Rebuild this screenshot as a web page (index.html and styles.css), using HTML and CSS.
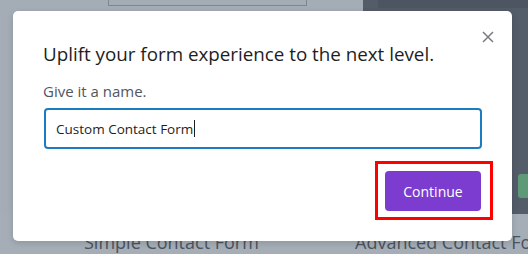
FILE: index.html
```html
<!DOCTYPE html>
<html lang="en">
<head>
    <meta charset="UTF-8">
    <meta name="viewport" content="width=device-width, initial-scale=1.0">
    <title>Name your form</title>
    <link rel="stylesheet" href="styles.css">
</head>
<body>
    <div class="backdrop">
        <div class="left-col">
            <div class="field-box"></div>
        </div>
        <div class="dark-panel">
            <div class="panel-top"></div>
            <div class="panel-btn"></div>
        </div>
        <div class="card-label left-label">Simple Contact Form</div>
        <div class="card-label right-label">Advanced Contact Form</div>
    </div>

    <div class="modal">
        <span class="close">
            <svg width="12" height="12" viewBox="0 0 12 12"><path d="M1 1 L11 11 M11 1 L1 11" stroke="#787c82" stroke-width="1.5" fill="none"/></svg>
        </span>
        <h2>Uplift your form experience to the next level.</h2>
        <label for="form-name">Give it a name.</label>
        <div class="input-box">
            <span class="input-text">Custom Contact Form</span><span class="caret"></span>
        </div>
        <div class="actions">
            <span class="highlight">
                <button class="btn-continue">Continue</button>
            </span>
        </div>
    </div>
</body>
</html>
```

FILE: styles.css
```css
body {
    margin: 0;
    width: 528px;
    height: 254px;
    overflow: hidden;
    position: relative;
    font-family: "Open Sans", "Noto Sans", sans-serif;
    background-color: #a5aeb7;
}
.backdrop {
    display: grid;
    grid-template-columns: 363px 165px;
    grid-template-rows: 214px 40px;
    height: 254px;
}
.left-col {
    background-color: #a4adb6;
}
.field-box {
    margin-left: 108px;
    width: 197px;
    height: 5px;
    border: 1px solid #7d8792;
    border-top: none;
}
.dark-panel {
    background-color: #535c69;
    display: flex;
    flex-direction: column;
}
.panel-top {
    height: 8px;
    margin-left: 15px;
    background-color: #4c5561;
}
.panel-btn {
    margin-top: 166px;
    margin-left: 155px;
    width: 20px;
    height: 24px;
    border-radius: 3px;
    background-color: #5e9a78;
}
.card-label {
    font-size: 18px;
    color: #4b535c;
    line-height: 24px;
    margin-top: 16px;
    white-space: nowrap;
    overflow: hidden;
}
.left-label {
    padding-left: 84px;
}
.right-label {
    margin-left: -8px;
}

.modal {
    position: absolute;
    left: 13px;
    top: 11px;
    width: 439px;
    padding: 29px 30px 30px 30px;
    background-color: white;
    border-radius: 5px;
    box-shadow: 0 2px 6px rgba(0, 0, 0, 0.15);
}
.close {
    position: absolute;
    top: 20px;
    right: 18px;
    line-height: 0;
}
h2 {
    margin: 0;
    font-size: 18.8px;
    font-weight: normal;
    line-height: 28px;
    color: #1e1e1e;
}
label {
    display: block;
    margin-top: 13px;
    font-size: 15px;
    line-height: 20px;
    color: #50575e;
}
.input-box {
    margin-top: 7px;
    margin-left: 1px;
    height: 37px;
    border: 2px solid #1b7dc0;
    border-radius: 4px;
    padding-left: 10px;
    display: flex;
    align-items: center;
}
.input-text {
    font-size: 13.5px;
    color: #1e1e1e;
}
.caret {
    width: 1px;
    height: 17px;
    margin-left: 1px;
    background-color: #1e1e1e;
}
.actions {
    display: flex;
    justify-content: flex-end;
    margin-top: 22px;
}
.highlight {
    position: relative;
    display: flex;
}
.highlight::after {
    content: "";
    position: absolute;
    left: -10px;
    right: -11px;
    top: -10px;
    bottom: -9px;
    border: 3px solid #ff0000;
}
.btn-continue {
    width: 96px;
    height: 40px;
    border: none;
    border-radius: 4px;
    background-color: #7b3ccf;
    color: white;
    font-family: "Open Sans", "Noto Sans", sans-serif;
    font-size: 14px;
    font-weight: 500;
    margin-right: 1px;
}
```
